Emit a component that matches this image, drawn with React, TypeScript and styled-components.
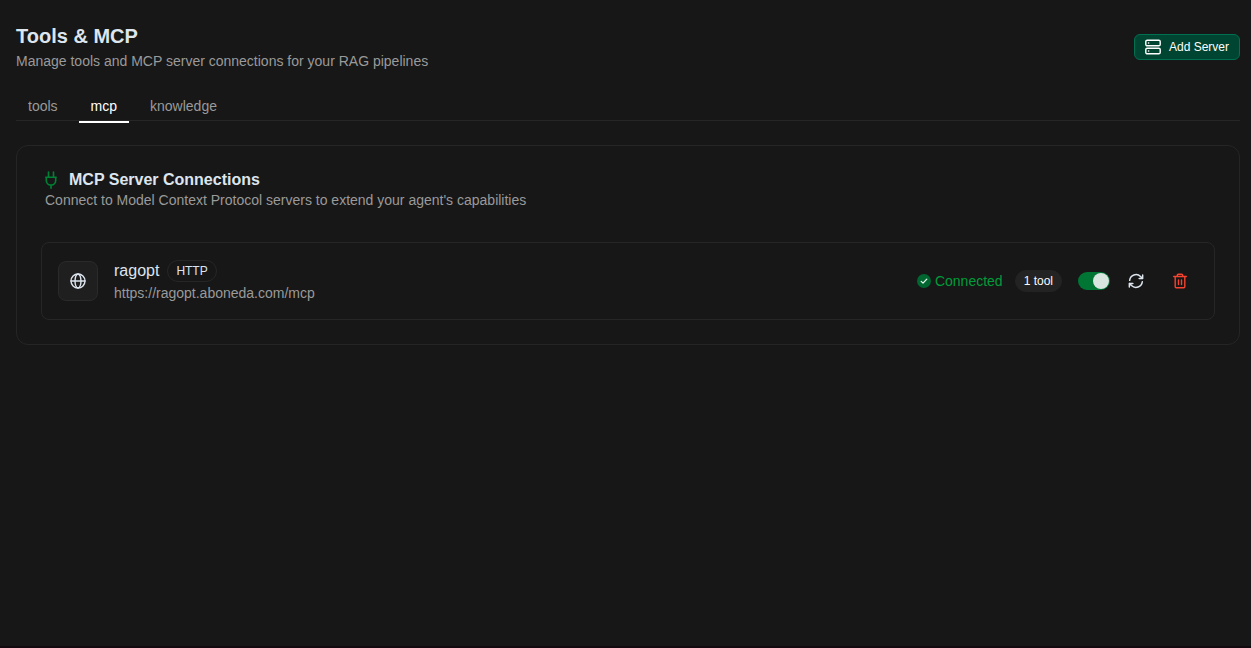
import React, { useState } from "react";
import styled, { createGlobalStyle } from "styled-components";

const Global = createGlobalStyle`
  *, *::before, *::after { box-sizing: border-box; }
  body {
    margin: 0;
    background: #171717;
    color: #dde5ef;
    font-family: "Liberation Sans", Arial, sans-serif;
    font-size: 14px;
    line-height: 20px;
  }
  button { font: inherit; color: inherit; cursor: pointer; }
  h1, h2, h3, p { margin: 0; }
`;

const Page = styled.div`
  display: flex;
  flex-direction: column;
  min-height: 100vh;
  border-bottom: 2px solid #120a0e;
`;

const Content = styled.main`
  display: flex;
  flex-direction: column;
  flex: 1;
  padding: 22px 11px 24px 16px;
`;

const Header = styled.header`
  display: flex;
  align-items: center;
  justify-content: space-between;
  gap: 16px;
`;

const Heading = styled.div`
  display: flex;
  flex-direction: column;
  gap: 1px;
`;

const Title = styled.h1`
  font-size: 20px;
  line-height: 28px;
  font-weight: 700;
`;

const Muted = styled.p`
  color: #9a9a9a;
`;

const AddButton = styled.button`
  display: inline-flex;
  align-items: center;
  gap: 8px;
  height: 26px;
  margin-top: 1px;
  padding: 0 10px;
  border: 1px solid #007050;
  border-radius: 6px;
  background: #004531;
  color: #fff;
  font-size: 12px;
  line-height: 16px;
`;

const Tabs = styled.div`
  display: flex;
  gap: 9px;
  margin-top: 20px;
  border-bottom: 1px solid #262626;
`;

const Tab = styled.button<{ $active: boolean }>`
  height: 32px;
  margin-bottom: -3px;
  padding: 0 12px;
  border: 0;
  border-bottom: 2px solid ${(p) => (p.$active ? "#fff" : "transparent")};
  background: none;
  color: ${(p) => (p.$active ? "#fff" : "#9a9a9a")};
`;

const Card = styled.section`
  margin-top: 24px;
  padding: 24px;
  border: 1px solid #252525;
  border-radius: 12px;
`;

const CardHeader = styled.div`
  padding-left: 4px;
`;

const CardTitle = styled.h2`
  display: flex;
  align-items: center;
  gap: 12px;
  font-size: 16px;
  line-height: 20px;
  font-weight: 700;
`;

const ServerRow = styled.article`
  display: flex;
  align-items: center;
  gap: 16px;
  margin-top: 32px;
  padding: 16px;
  border: 1px solid #262626;
  border-radius: 8px;
`;

const IconBox = styled.div`
  display: grid;
  place-items: center;
  width: 40px;
  height: 40px;
  border: 1px solid #2a2a2a;
  border-radius: 8px;
  background: #1f1f1f;
`;

const ServerInfo = styled.div`
  flex: 1;
  min-width: 0;
`;

const NameLine = styled.div`
  display: flex;
  align-items: center;
  gap: 8px;
  height: 24px;
`;

const ServerName = styled.h3`
  font-size: 16px;
  line-height: 24px;
  font-weight: 400;
`;

const Badge = styled.span<{ $filled?: boolean }>`
  display: inline-flex;
  align-items: center;
  height: 22px;
  padding: 0 8px;
  border: 1px solid ${(p) => (p.$filled ? "#232323" : "#262626")};
  border-radius: 11px;
  background: ${(p) => (p.$filled ? "#232323" : "transparent")};
  color: ${(p) => (p.$filled ? "#fafafa" : "#dde5ef")};
  font-size: 12px;
  line-height: 16px;
`;

const Actions = styled.div`
  display: flex;
  align-items: center;
`;

const Status = styled.span`
  display: inline-flex;
  align-items: center;
  gap: 4px;
  margin-right: 12px;
  color: #009c3b;
`;

const Switch = styled.input`
  appearance: none;
  display: flex;
  align-items: center;
  width: 32px;
  height: 18px;
  margin: 0 10px 0 16px;
  padding: 0 1px;
  border-radius: 9px;
  background: #404040;
  cursor: pointer;
  &::before {
    content: "";
    width: 16px;
    height: 16px;
    border-radius: 50%;
    background: #d9e5df;
  }
  &:checked {
    justify-content: flex-end;
    background: #007534;
  }
`;

const IconButton = styled.button<{ $danger?: boolean }>`
  display: grid;
  place-items: center;
  width: 32px;
  height: 32px;
  margin-right: ${(p) => (p.$danger ? 2 : 12)}px;
  padding: 0;
  border: 0;
  background: none;
  color: ${(p) => (p.$danger ? "#f5432f" : "#dde5ef")};
`;

const line = {
  fill: "none",
  stroke: "currentColor",
  strokeLinecap: "round" as const,
  strokeLinejoin: "round" as const,
  "aria-hidden": true,
};

const ServerIcon = () => (
  <svg width="16" height="16" viewBox="0 0 16 16" {...line} strokeWidth="1.4">
    <rect x="0.8" y="1.200" width="14.4" height="5.600" rx="1.4" />
    <rect x="0.8" y="9.200" width="14.4" height="5.600" rx="1.4" />
    <path d="M3.500 4h.2M3.500 12h.2" />
  </svg>
);

const PlugIcon = () => (
  <svg width="12" height="18" viewBox="0 0 12 18" {...line} stroke="#008236" strokeWidth="1.6">
    <path d="M6 17.200v-3.200M3.500 6V1M8.500 6V1M.800 6.300h10.400M1.300 6.300v3.300a4.400 4.400 0 0 0 4.400 4.400h.6a4.400 4.400 0 0 0 4.400-4.400V6.300" />
  </svg>
);

const GlobeIcon = () => (
  <svg width="16" height="16" viewBox="0 0 16 16" {...line} strokeWidth="1.4">
    <circle cx="8" cy="8" r="7" />
    <ellipse cx="8" cy="8" rx="3" ry="7" />
    <path d="M1 8h14" />
  </svg>
);

const CheckIcon = () => (
  <svg width="14" height="14" viewBox="0 0 14 14" {...line} strokeWidth="1.3">
    <circle cx="7" cy="7" r="7" fill="#016630" stroke="none" />
    <path d="m4.2 7.400 1.800 1.700 3.800-4" stroke="#e8f5ec" />
  </svg>
);

const RefreshIcon = () => (
  <svg width="16" height="16" viewBox="0 0 24 24" {...line} strokeWidth="2.2">
    <path d="M2.5 11a9.6 9.6 0 0 1 16.3-5.8L22 8.300M22 3v5.300h-5.300" />
    <path d="M21.500 13a9.600 9.600 0 0 1-16.300 5.800L2 15.700M2 21v-5.300h5.300" />
  </svg>
);

const TrashIcon = () => (
  <svg width="16" height="16" viewBox="0 0 16 16" {...line} strokeWidth="1.4">
    <path d="M1.700 3.500h12.600M5.300 3.500V2.200c0-.6.4-1 1-1h3.400c.6 0 1 .4 1 1v1.300M3.200 3.500v10.300c0 .6.400 1 1 1h7.600c.6 0 1-.4 1-1V3.500M6.500 7v4.500M9.500 7v4.500" />
  </svg>
);

const tabs = ["tools", "mcp", "knowledge"];

export default function App() {
  const [active, setActive] = useState("mcp");
  const [enabled, setEnabled] = useState(true);
  return (
    <Page>
      <Global />
      <Content>
        <Header>
          <Heading>
            <Title>Tools &amp; MCP</Title>
            <Muted>Manage tools and MCP server connections for your RAG pipelines</Muted>
          </Heading>
          <AddButton type="button">
            <ServerIcon />
            Add Server
          </AddButton>
        </Header>
        <Tabs role="tablist">
          {tabs.map((t) => (
            <Tab key={t} type="button" role="tab" aria-selected={t === active} $active={t === active} onClick={() => setActive(t)}>
              {t}
            </Tab>
          ))}
        </Tabs>
        <Card>
          <CardHeader>
            <CardTitle>
              <PlugIcon />
              MCP Server Connections
            </CardTitle>
            <Muted>Connect to Model Context Protocol servers to extend your agent's capabilities</Muted>
          </CardHeader>
          <ServerRow>
            <IconBox>
              <GlobeIcon />
            </IconBox>
            <ServerInfo>
              <NameLine>
                <ServerName>ragopt</ServerName>
                <Badge>HTTP</Badge>
              </NameLine>
              <Muted>https://ragopt.aboneda.com/mcp</Muted>
            </ServerInfo>
            <Actions>
              <Status>
                <CheckIcon />
                Connected
              </Status>
              <Badge $filled>1 tool</Badge>
              <Switch type="checkbox" role="switch" aria-label="Enable ragopt" checked={enabled} onChange={() => setEnabled(!enabled)} />
              <IconButton type="button" aria-label="Refresh server">
                <RefreshIcon />
              </IconButton>
              <IconButton type="button" aria-label="Delete server" $danger>
                <TrashIcon />
              </IconButton>
            </Actions>
          </ServerRow>
        </Card>
      </Content>
    </Page>
  );
}
